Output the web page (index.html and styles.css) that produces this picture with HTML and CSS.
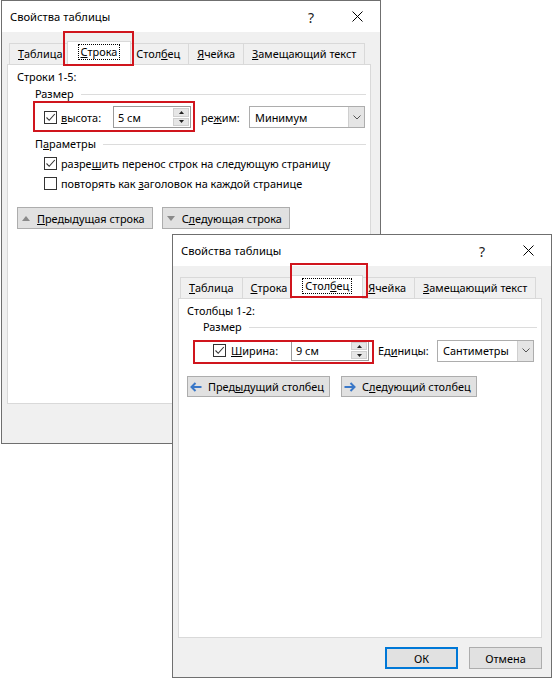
FILE: index.html
```html
<!DOCTYPE html>
<html lang="ru">
<head>
<meta charset="utf-8">
<title>Свойства таблицы</title>
<link rel="stylesheet" href="styles.css">
</head>
<body>
<section class="dialog d1">
  <header class="titlebar">
    <span class="title">Свойства таблицы</span>
    <span class="tbtn help">?</span>
    <span class="tbtn close"><svg width="11" height="11" viewBox="0 0 11 11"><path d="M0.5 0.5 L10.5 10.5 M10.5 0.5 L0.5 10.5" stroke="#000" stroke-width="1" fill="none"/></svg></span>
  </header>
  <div class="body">
    <nav class="tabs">
      <span class="tab"><u>Т</u>аблица</span>
      <span class="tab active"><span class="focus"><u>С</u>трока</span></span>
      <span class="tab">Стол<u>б</u>ец</span>
      <span class="tab"><u>Я</u>чейка</span>
      <span class="tab"><u>З</u>амещающий текст</span>
    </nav>
    <div class="panel p1">
      <div class="caption">Строки 1-5:</div>
      <div class="group"><span>Размер</span></div>
      <div class="row r1">
        <span class="chk"><svg width="11" height="11" viewBox="0 0 11 11"><path d="M1.5 5.5 L4.2 8.3 L9.8 2" stroke="#333" stroke-width="1.1" fill="none"/></svg></span>
        <span class="lbl l-h"><u>в</u>ысота:</span>
        <span class="spin s1"><span class="val">5 см</span><span class="spinbtns"><i class="sb"><svg width="5" height="3" viewBox="0 0 5 3"><path d="M0 3 L2.5 0 L5 3Z" fill="#222"/></svg></i><i class="sb"><svg width="5" height="3" viewBox="0 0 5 3"><path d="M0 0 L2.5 3 L5 0Z" fill="#222"/></svg></i></span></span>
        <span class="lbl l-m">ре<u>ж</u>им:</span>
        <span class="combo c1"><span class="val">Минимум</span><span class="drop"><svg width="8" height="5" viewBox="0 0 8 5"><path d="M0.5 0.5 L4 4 L7.5 0.5" stroke="#555" stroke-width="1" fill="none"/></svg></span></span>
      </div>
      <div class="group g2"><span>П<u>а</u>раметры</span></div>
      <div class="opt o1"><span class="chk"><svg width="11" height="11" viewBox="0 0 11 11"><path d="M1.5 5.5 L4.2 8.3 L9.8 2" stroke="#333" stroke-width="1.1" fill="none"/></svg></span><span>разре<u>ш</u>ить перенос строк на следующую страницу</span></div>
      <div class="opt"><span class="chk"></span><span>повторять как <u>з</u>аголовок на каждой странице</span></div>
      <div class="navrow n1">
        <button class="btn nav tri"><svg width="8" height="5" viewBox="0 0 8 5"><path d="M0 5 L4 0 L8 5Z" fill="#8a8a8a"/></svg><span><u>П</u>редыдущая строка</span></button>
        <button class="btn nav tri"><svg width="8" height="5" viewBox="0 0 8 5"><path d="M0 0 L4 5 L8 0Z" fill="#8a8a8a"/></svg><span>С<u>л</u>едующая строка</span></button>
      </div>
    </div>
    <footer class="footer">
      <button class="btn act ok">ОК</button>
      <button class="btn act">Отмена</button>
    </footer>
  </div>
  <div class="mark m-tab1"></div>
  <div class="mark m-row1"></div>
</section>

<section class="dialog d2">
  <header class="titlebar">
    <span class="title">Свойства таблицы</span>
    <span class="tbtn help">?</span>
    <span class="tbtn close"><svg width="11" height="11" viewBox="0 0 11 11"><path d="M0.5 0.5 L10.5 10.5 M10.5 0.5 L0.5 10.5" stroke="#000" stroke-width="1" fill="none"/></svg></span>
  </header>
  <div class="body">
    <nav class="tabs">
      <span class="tab"><u>Т</u>аблица</span>
      <span class="tab"><u>С</u>трока</span>
      <span class="tab active"><span class="focus">Стол<u>б</u>ец</span></span>
      <span class="tab"><u>Я</u>чейка</span>
      <span class="tab"><u>З</u>амещающий текст</span>
    </nav>
    <div class="panel p2">
      <div class="caption">Столбцы 1-2:</div>
      <div class="group"><span>Размер</span></div>
      <div class="row r2">
        <span class="chk"><svg width="11" height="11" viewBox="0 0 11 11"><path d="M1.5 5.5 L4.2 8.3 L9.8 2" stroke="#333" stroke-width="1.1" fill="none"/></svg></span>
        <span class="lbl l-w"><u>Ш</u>ирина:</span>
        <span class="spin s2"><span class="val">9 см</span><span class="spinbtns"><i class="sb"><svg width="5" height="3" viewBox="0 0 5 3"><path d="M0 3 L2.5 0 L5 3Z" fill="#222"/></svg></i><i class="sb"><svg width="5" height="3" viewBox="0 0 5 3"><path d="M0 0 L2.5 3 L5 0Z" fill="#222"/></svg></i></span></span>
        <span class="lbl l-u">Ед<u>и</u>ницы:</span>
        <span class="combo c2"><span class="val">Сантиметры</span><span class="drop"><svg width="8" height="5" viewBox="0 0 8 5"><path d="M0.5 0.5 L4 4 L7.5 0.5" stroke="#555" stroke-width="1" fill="none"/></svg></span></span>
      </div>
      <div class="navrow n2">
        <button class="btn nav arr"><svg width="12" height="10" viewBox="0 0 12 10"><path d="M5.5 1 L1.5 5 L5.5 9 M1.5 5 H11.5" stroke="#3a78c8" stroke-width="2" fill="none"/></svg><span>Пред<u>ы</u>дущий столбец</span></button>
        <button class="btn nav arr"><svg width="12" height="10" viewBox="0 0 12 10"><path d="M6.5 1 L10.5 5 L6.5 9 M10.5 5 H0.5" stroke="#3a78c8" stroke-width="2" fill="none"/></svg><span>С<u>л</u>едующий столбец</span></button>
      </div>
    </div>
    <footer class="footer">
      <button class="btn act ok">ОК</button>
      <button class="btn act">Отмена</button>
    </footer>
  </div>
  <div class="mark m-tab2"></div>
  <div class="mark m-row2"></div>
</section>
</body>
</html>
```

FILE: styles.css
```css
* { box-sizing: border-box; margin: 0; padding: 0; }
html, body { background: #fff; }
body {
  margin: 0;
  width: 554px;
  height: 682px;
  position: relative;
  overflow: hidden;
  font-family: "Segoe UI", "Noto Sans", sans-serif;
  font-size: 10.9px;
  color: #000;
}
u { text-decoration: underline; text-underline-offset: 1px; }

.dialog {
  position: absolute;
  width: 380px;
  height: 444px;
  border: 1px solid #6f6f6f;
  background: #f0f0f0;
  display: flex;
  flex-direction: column;
}
.d1 { left: 1px; top: 0; }
.d2 { left: 172px; top: 234px; }

.titlebar {
  height: 31px;
  flex: none;
  background: #fff;
  display: flex;
  align-items: center;
  padding-left: 8px;
}
.title { flex: 1; font-size: 11.2px; }
.tbtn {
  width: 46px;
  height: 31px;
  display: flex;
  align-items: center;
  justify-content: center;
}
.help { font-size: 14px; color: #222; padding-top: 1px; }

.body {
  flex: 1;
  display: flex;
  flex-direction: column;
  padding: 0 9px 0 5px;
}

.tabs {
  display: flex;
  align-items: flex-end;
  height: 23px;
  margin-top: 9px;
  padding-left: 2px;
  position: relative;
  z-index: 1;
}
.tab {
  height: 21px;
  padding: 0 8px 2px;
  border: 1px solid #d9d9d9;
  border-bottom: none;
  margin-right: -1px;
  background: #f0f0f0;
  display: flex;
  align-items: center;
  white-space: nowrap;
}
.tab.active {
  height: 24px;
  margin: 0 -4px -1px -4px;
  padding: 0 11px 3px 11px;
  background: #fff;
  position: relative;
  z-index: 2;
}
.focus {
  outline: 1px dotted #000;
  outline-offset: 0;
  padding: 0 2px;
  line-height: 14px;
}

.panel {
  height: 340px;
  flex: none;
  background: #fff;
  border: 1px solid #d9d9d9;
  padding: 0 4px 0 9px;
  line-height: 15px;
}

.caption { margin-top: 4px; height: 15px; }
.group {
  display: flex;
  align-items: center;
  margin-top: 2px;
  margin-left: 18px;
  height: 15px;
}
.group::after {
  content: "";
  flex: 1;
  height: 1px;
  background: #dcdcdc;
  margin-left: 7px;
  margin-top: 1px;
}
.g2 { margin-top: 8px; }

.row { display: flex; align-items: center; height: 22px; margin-top: 5px; }
.r1 { padding-left: 27px; }

.chk {
  width: 13px;
  height: 13px;
  flex: none;
  border: 1px solid #333;
  background: #fff;
  display: flex;
  align-items: center;
  justify-content: center;
}
.lbl { white-space: nowrap; }
.l-h { margin-left: 4px; width: 52px; }
.l-m { margin-left: 10px; width: 48px; }

.spin {
  height: 22px;
  border: 1px solid #9a9a9a;
  background: #fff;
  display: flex;
  align-items: center;
  justify-content: space-between;
  padding: 0 1px 0 4px;
}
.s1 { width: 78px; }
.spinbtns {
  width: 16px;
  height: 18px;
  display: flex;
  flex-direction: column;
  gap: 1px;
}
.sb {
  flex: 1;
  background: #e6e6e6;
  border: 1px solid #cfcfcf;
  display: flex;
  align-items: center;
  justify-content: center;
}

.combo {
  height: 22px;
  border: 1px solid #adadad;
  background: #fff;
  display: flex;
  align-items: stretch;
}
.combo .val { flex: 1; display: flex; align-items: center; padding-left: 5px; }
.combo .drop {
  width: 16px;
  background: #e5e5e5;
  border-left: 1px solid #cfcfcf;
  display: flex;
  align-items: center;
  justify-content: center;
}
.c1 { width: 116px; }

.opt {
  display: flex;
  align-items: center;
  height: 20px;
  padding-left: 27px;
  gap: 4px;
  white-space: nowrap;
}
.o1 { margin-top: 2px; }

.navrow { display: flex; margin-top: 14px; }
.btn {
  font: inherit;
  color: #000;
  background: #e1e1e1;
  border: 1px solid #adadad;
  height: 22px;
  display: flex;
  align-items: center;
  white-space: nowrap;
}
.nav.tri { padding: 0 7px 0 4px; gap: 7px; }
.n1 { gap: 9px; }

.footer {
  display: flex;
  justify-content: flex-end;
  gap: 11px;
  margin-top: 9px;
}
.act { width: 73px; justify-content: center; }
.ok { border: 2px solid #0078d7; }

/* dialog 2 panel */
.p2 { padding-left: 8px; }
.p2 .group { margin-left: 16px; margin-top: 1px; }
.row.r2 { height: 21px; margin-top: 6px; padding-left: 26px; }
.l-w { margin-left: 5px; width: 60px; }
.s2 { width: 78px; height: 21px; }
.s2 .spinbtns { height: 17px; }
.l-u { margin-left: 9px; width: 59px; }
.c2 { width: 97px; height: 22px; }
.n2 { gap: 11px; margin-top: 15px; }
.nav.arr { padding: 0 5px 0 2px; gap: 6px; height: 21px; }

/* annotation frames */
.mark {
  position: absolute;
  border: 2px solid #d0151d;
  z-index: 5;
}
.m-tab1 { left: 61px; top: 30px; width: 71px; height: 35px; }
.m-row1 { left: 31px; top: 100px; width: 162px; height: 31px; }
.m-tab2 { left: 117px; top: 28px; width: 78px; height: 35px; }
.m-row2 { left: 20px; top: 105px; width: 181px; height: 24px; }
```
